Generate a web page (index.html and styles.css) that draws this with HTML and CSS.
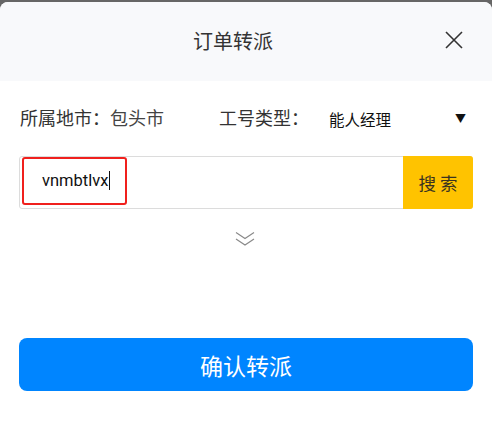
FILE: index.html
```html
<!DOCTYPE html>
<html lang="zh-CN">
<head>
<meta charset="utf-8">
<link rel="stylesheet" href="styles.css">
</head>
<body>
<div class="backdrop">
  <div class="sheet">
    <header class="sheet-head">
      <h1 class="title">订单转派</h1>
      <button class="close" aria-label="关闭">
        <svg width="18" height="18" viewBox="0 0 18 18"><path d="M1 1L17 17M17 1L1 17" stroke="#333" stroke-width="1.6" fill="none"/></svg>
      </button>
    </header>
    <div class="sheet-body">
      <div class="info-row">
        <div class="field city"><span class="label">所属地市：</span><span class="value">包头市</span></div>
        <div class="field type"><span class="label">工号类型：</span>
          <div class="select"><span class="select-text">能人经理</span><span class="arrow">▼</span></div>
        </div>
      </div>
      <div class="search">
        <div class="search-input"><span class="query">vnmbtlvx</span></div>
        <button class="search-btn">搜 索</button>
      </div>
      <div class="more">
        <svg width="20" height="16" viewBox="0 0 20 16"><path d="M1 1.5L10 7.5L19 1.5M1 8L10 14L19 8" stroke="#8a8a8a" stroke-width="1.2" fill="none"/></svg>
      </div>
      <button class="confirm">确认转派</button>
    </div>
  </div>
</div>
</body>
</html>
```
FILE: styles.css
```css
* { box-sizing: border-box; }
html, body { margin: 0; padding: 0; }
body {
  font-family: "Noto Sans CJK SC", "Noto Sans", sans-serif;
  background: #ffffff;
}
.backdrop {
  background: #666666;
  padding-top: 2px;
  height: 433px;
}
.sheet {
  background: #ffffff;
  border-radius: 8px 8px 0 0;
  height: 431px;
  overflow: hidden;
}
.sheet-head {
  height: 79px;
  background: #f8f9fb;
  display: flex;
  align-items: center;
  justify-content: center;
  position: relative;
}
.title {
  margin: 0;
  font-size: 20px;
  font-weight: 400;
  color: #333333;
  margin-left: -26px;
  margin-top: -2px;
}
.close {
  position: absolute;
  right: 29px;
  top: 29px;
  border: 0;
  background: none;
  padding: 0;
  width: 18px;
  height: 18px;
  display: flex;
}
.sheet-body {
  padding: 0 19px 0 19px;
}
.info-row {
  display: flex;
  align-items: center;
  height: 68px;
  padding-top: 3px;
}
.field { display: flex; align-items: center; }
.label, .value {
  font-size: 18px;
  color: #333333;
}
.city { width: 200px; padding-left: 1px; }
.type { flex: 1; }
.value { color: #444444; }
.select {
  flex: 1;
  display: flex;
  align-items: center;
  justify-content: space-between;
  padding-left: 20px;
  padding-right: 7px;
  margin-top: 4px;
}
.select-text {
  font-size: 15.5px;
  color: #111111;
}
.arrow {
  font-size: 11px;
  color: #111111;
  margin-top: -2px;
}
.search {
  display: flex;
  height: 53px;
  border: 1px solid #dcdcdc;
  border-radius: 3px;
  margin-top: 7px;
}
.search-input {
  flex: 1;
  display: flex;
  align-items: center;
}
.search-input .query {
  display: flex;
  align-items: center;
  width: 105px;
  height: 48px;
  margin-left: 2px;
  margin-top: -4px;
  border: 2px solid #f0201d;
  border-radius: 3px;
  padding-left: 18px;
  font-family: Roboto, "Noto Sans", sans-serif;
  font-size: 16.5px;
  color: #111111;
}
.query::after {
  content: "";
  display: inline-block;
  width: 1px;
  height: 19px;
  background: #111;
  margin-left: 1px;
}
.search-btn {
  width: 70px;
  border: 0;
  background: #ffc300;
  border-radius: 0 3px 3px 0;
  font-family: "Noto Sans CJK SC", sans-serif;
  font-size: 17.5px;
  color: #3a3320;
  padding: 0;
  margin: -1px -1px -1px 0;
}
.more {
  display: flex;
  justify-content: center;
  padding-top: 22px;
  height: 129px;
}
.more svg { margin-left: -3px; }
.confirm {
  display: block;
  width: 454px;
  height: 53px;
  border: 0;
  border-radius: 8px;
  background: #0085ff;
  color: #ffffff;
  font-family: "Noto Sans CJK SC", sans-serif;
  font-size: 23px;
  padding: 0;
}
```
